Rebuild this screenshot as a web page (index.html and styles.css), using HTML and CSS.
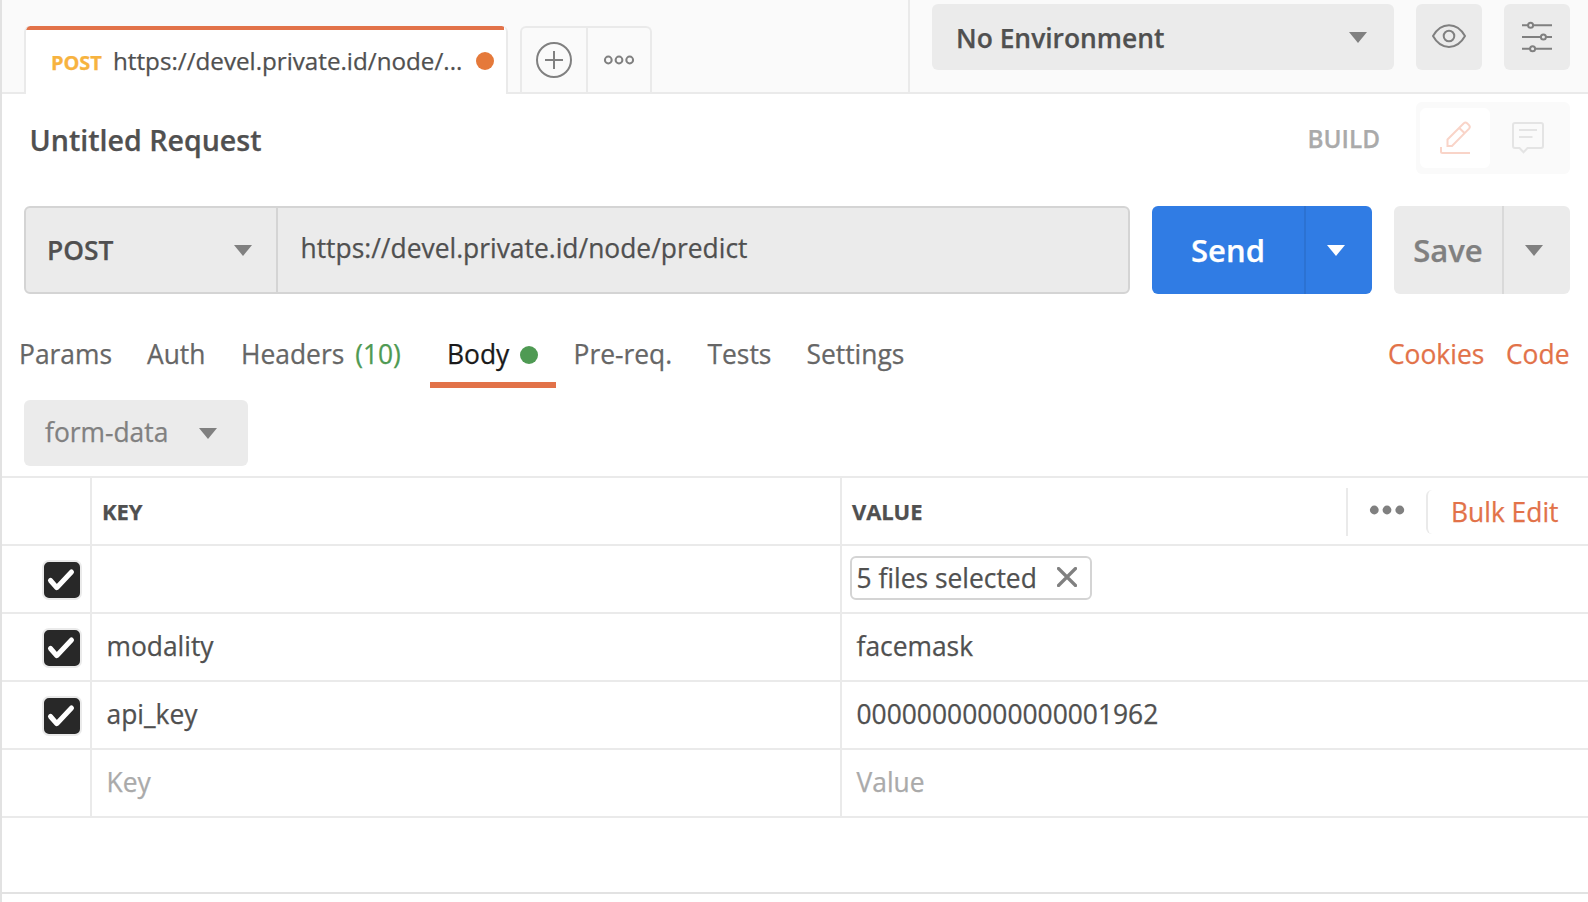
FILE: index.html
```html
<!DOCTYPE html>
<html lang="en">
<head>
<meta charset="utf-8">
<title>Untitled Request</title>
<link rel="stylesheet" href="styles.css">
</head>
<body>
<main class="app">
  <header class="topbar">
    <div class="tabs">
      <div class="tab">
        <span class="tab-method">POST</span>
        <span class="tab-url">https://devel.private.id/node/...</span>
        <i class="unsaved"></i>
      </div>
      <div class="tab-actions">
        <button class="tab-action"><svg width="64" height="64" viewBox="0 0 64 64" fill="none" stroke="#808080" stroke-width="2"><circle cx="32" cy="32" r="17"/><path d="M23 32h18M32 23v18"/></svg></button>
        <button class="tab-action"><svg width="62" height="64" viewBox="0 0 62 64" fill="none" stroke="#808080" stroke-width="2"><circle cx="20.3" cy="32" r="3.4"/><circle cx="31" cy="32" r="3.4"/><circle cx="41.7" cy="32" r="3.4"/></svg></button>
      </div>
    </div>
    <div class="environment">
      <div class="env-select"><span>No Environment</span><svg class="caret" viewBox="0 0 18 11"><path d="M0 0h18L9 11z"/></svg></div>
      <button class="env-button"><svg width="66" height="66" viewBox="0 0 66 66" fill="none" stroke="#808080" stroke-width="2"><path d="M17 32C25 17.5 41 17.5 49 32C41 46.500 25 46.500 17 32Z" stroke-linejoin="round"/><circle cx="33" cy="32" r="5.300"/></svg></button>
      <button class="env-button"><svg width="66" height="66" viewBox="0 0 66 66" fill="none" stroke="#808080" stroke-width="2"><path d="M18 21.200h6M29 21.200h19M18 33h19M42 33h6M18 44.700h8M31 44.700h17"/><circle cx="26.600" cy="21.200" r="2.500"/><circle cx="39.400" cy="33" r="2.500"/><circle cx="28.600" cy="44.700" r="2.500"/></svg></button>
    </div>
  </header>

  <section class="title-row">
    <h1>Untitled Request</h1>
    <span class="mode">BUILD</span>
    <div class="mode-toggle">
      <button class="mode-button active"><svg width="70" height="60" viewBox="0 0 70 60" fill="none" stroke="#f9d4c8" stroke-width="2"><path d="M27.500 38V31.500L43.800 15.200Q45.500 13.800 47.100 15.300L49.200 17.400Q50.500 19 49.100 20.600L32 38ZM39.300 20L44.700 25.300"/><path d="M21 39V43.500Q21 45 22.500 45H50"/></svg></button>
      <button class="mode-button"><svg width="70" height="60" viewBox="0 0 70 60" fill="none" stroke="#e4e4e4" stroke-width="2"><path d="M24 15H50Q52 15 52 17V38Q52 40 50 40H36.500L32.500 44.200L28.500 40H24Q22 40 22 38V17Q22 15 24 15ZM28 22h18M28 29h13.500"/></svg></button>
    </div>
  </section>

  <section class="request-row">
    <div class="request-line">
      <div class="method"><span>POST</span><svg class="caret" viewBox="0 0 18 11"><path d="M0 0h18L9 11z"/></svg></div>
      <div class="url">https://devel.private.id/node/predict</div>
    </div>
    <div class="split send"><span class="split-main">Send</span><span class="split-more"><svg class="caret" viewBox="0 0 18 11"><path d="M0 0h18L9 11z"/></svg></span></div>
    <div class="split save"><span class="split-main">Save</span><span class="split-more"><svg class="caret" viewBox="0 0 18 11"><path d="M0 0h18L9 11z"/></svg></span></div>
  </section>

  <nav class="sections">
    <a>Params</a>
    <a>Auth</a>
    <a>Headers <span class="count">(10)</span></a>
    <a class="current">Body<i class="has-body"></i></a>
    <a>Pre-req.</a>
    <a>Tests</a>
    <a>Settings</a>
    <a class="link">Cookies</a>
    <a class="link">Code</a>
  </nav>

  <div class="body-type"><span>form-data</span><svg class="caret" viewBox="0 0 18 11"><path d="M0 0h18L9 11z"/></svg></div>

  <section class="params">
    <div class="row head">
      <div class="cell"></div>
      <div class="cell">KEY</div>
      <div class="cell">VALUE
        <div class="head-tools">
          <button class="more"><svg width="78" height="48" viewBox="0 0 78 48" fill="#808080"><circle cx="26.300" cy="22" r="4.400"/><circle cx="39" cy="22" r="4.400"/><circle cx="51.800" cy="22" r="4.400"/></svg></button>
          <button class="bulk">Bulk Edit</button>
        </div>
      </div>
    </div>
    <div class="row">
      <div class="cell"><svg class="check" viewBox="0 0 36 36"><path d="M6.500 18.500L12.700 25.700L27.500 10"/></svg></div>
      <div class="cell"></div>
      <div class="cell files"><div class="chip">5 files selected<svg width="20" height="20" viewBox="0 0 20 20"><path d="M1.500 1.500L18.500 18.500M18.500 1.500L1.500 18.500"/></svg></div></div>
    </div>
    <div class="row">
      <div class="cell"><svg class="check" viewBox="0 0 36 36"><path d="M6.500 18.500L12.700 25.700L27.500 10"/></svg></div>
      <div class="cell">modality</div>
      <div class="cell">facemask</div>
    </div>
    <div class="row">
      <div class="cell"><svg class="check" viewBox="0 0 36 36"><path d="M6.500 18.500L12.700 25.700L27.500 10"/></svg></div>
      <div class="cell">api_key</div>
      <div class="cell">00000000000000001962</div>
    </div>
    <div class="row empty">
      <div class="cell"></div>
      <div class="cell">Key</div>
      <div class="cell">Value</div>
    </div>
  </section>
  <footer class="response"></footer>
</main>
</body>
</html>
```
FILE: styles.css
```css
* { box-sizing: border-box; }

body {
  margin: 0;
  background: #fff;
  color: #505050;
  font: 400 26.4px "Open Sans", sans-serif;
  -webkit-text-stroke: 0.25px currentColor;
}

button {
  margin: 0;
  padding: 0;
  border: 0;
  background: none;
  color: inherit;
  font: inherit;
  letter-spacing: inherit;
}

svg { display: block; }

.app {
  display: flex;
  flex-direction: column;
  width: 1588px;
  height: 902px;
  border-left: 2px solid #e2e2e2;
  overflow: hidden;
}

.caret {
  flex: none;
  width: 18px;
  height: 11px;
  fill: #808080;
}

/* Top bar */
.topbar {
  display: flex;
  flex: none;
  height: 94px;
  background: #fafafa;
  border-bottom: 2px solid #eaeaea;
}

.tabs {
  display: flex;
  flex: none;
  width: 906px;
  padding: 26px 0 0 22px;
}

.tab {
  display: flex;
  align-items: baseline;
  width: 484px;
  height: 68px;
  padding: 0 12px 0 25px;
  border: solid #eaeaea;
  border-width: 0 2px;
  border-radius: 6px 6px 0 0;
  background: linear-gradient(#e27249, #e27249) 0 0 / 478px 4px no-repeat, #fff;
  line-height: 70px;
}

.tab-method {
  width: 62px;
  color: #f7b33f;
  font-size: 20px;
  font-weight: 700;
  letter-spacing: -0.1px;
}

.tab-url {
  width: 363px;
  font-size: 24.2px;
  white-space: nowrap;
}

.unsaved {
  align-self: center;
  width: 18px;
  height: 18px;
  margin-top: 2px;
  border-radius: 50%;
  background: #e5793a;
}

.tab-actions {
  display: flex;
  height: 66px;
  margin-left: 12px;
  border: 2px solid #eaeaea;
  border-bottom: 0;
  border-radius: 6px 6px 0 0;
}

.tab-action + .tab-action { border-left: 2px solid #eaeaea; }

.environment {
  display: flex;
  flex: 1;
  gap: 22px;
  padding: 4px 18px 0 22px;
  border-left: 2px solid #eaeaea;
}

.env-select,
.env-button {
  height: 66px;
  border-radius: 6px;
  background: #ebebeb;
}

.env-select {
  display: flex;
  align-items: center;
  justify-content: space-between;
  width: 462px;
  padding: 0 27px 0 24px;
  font-weight: 600;
  line-height: 66px;
}

.env-select span { margin-top: 2px; }
.env-button { flex: none; width: 66px; }

/* Request title */
.title-row {
  display: flex;
  flex: none;
  align-items: center;
  height: 88px;
  padding: 0 18px 0 27.5px;
}

h1 {
  flex: 1;
  margin: 2px 0 0;
  font-size: 28.6px;
  font-weight: 600;
}

.mode {
  margin: 0 36px 0 0;
  color: #aaa;
  font-size: 24.3px;
  font-weight: 600;
}

.mode-toggle {
  display: flex;
  gap: 1px;
  width: 154px;
  height: 72px;
  padding: 6px 4px;
  border-radius: 6px;
  background: #fafafa;
}

.mode-button {
  width: 70px;
  height: 60px;
  border-radius: 6px;
}

.mode-button.active { background: #fff; }

/* URL line */
.request-row {
  display: flex;
  flex: none;
  gap: 22px;
  height: 112px;
  padding: 24px 18px 0 22px;
}

.request-line {
  display: flex;
  width: 1106px;
  height: 88px;
  border: 2px solid #d4d4d4;
  border-radius: 6px;
  background: #ebebeb;
}

.method {
  display: flex;
  align-items: center;
  justify-content: space-between;
  width: 252px;
  padding: 0 24px 0 21px;
  border-right: 2px solid #d4d4d4;
  font-weight: 600;
}

.url {
  padding-left: 22.5px;
  line-height: 80px;
}

.split {
  display: flex;
  height: 88px;
  border-radius: 6px;
  background: #ebebeb;
  color: #808080;
  font-size: 31px;
  font-weight: 600;
  line-height: 88px;
}

.split-main { flex: 1; text-align: center; }

.split-more {
  display: flex;
  align-items: center;
  justify-content: center;
  width: 68px;
  padding-right: 6px;
  border-left: 2px solid #d9d9d9;
}

.send { width: 220px; background: #307ce4; color: #fff; }
.send .split-more { border-color: #2c72d2; }
.send .caret { fill: #fff; }
.save { width: 176px; }

/* Request sections */
.sections {
  display: grid;
  grid-template-columns: 128px 94px 187px 145.5px 134px 99px 581px 118px 66px;
  flex: none;
  height: 88px;
  margin: 6px 0 0 17px;
  padding-top: 20px;
  color: #666;
  line-height: 68px;
}

.sections a { height: 68px; white-space: nowrap; }
.sections .count { margin-left: 4px; color: #4f9a53; }

.sections .current {
  display: flex;
  align-items: center;
  width: 126px;
  height: 68px;
  margin-left: 2px;
  padding-left: 17px;
  background: linear-gradient(#e27249, #e27249) bottom / 100% 6px no-repeat;
  color: #1a1a1a;
}

.has-body {
  width: 18px;
  height: 18px;
  margin: 2px 0 0 11px;
  border-radius: 50%;
  background: #4f9a53;
}

.sections .link { padding-left: 0.5px; color: #e27249; }

.body-type {
  display: flex;
  flex: none;
  align-items: center;
  justify-content: space-between;
  width: 224px;
  height: 66px;
  margin: 12px 0 10px 22px;
  padding: 0 31px 0 21px;
  border-radius: 6px;
  background: #ebebeb;
  color: #808080;
  line-height: 64px;
}

.body-type span { margin-top: -2px; }

/* Form-data table */
.params { flex: none; border-top: 2px solid #eaeaea; }

.row {
  display: grid;
  grid-template-columns: 90px 750px 1fr;
  height: 68px;
  border-bottom: 2px solid #eaeaea;
  line-height: 64px;
}

.cell {
  padding-left: 14.5px;
  border-right: 2px solid #eaeaea;
}

.cell:first-child { padding-left: 14px; }
.cell:last-child { border-right: 0; }

.head .cell {
  display: flex;
  justify-content: space-between;
  padding-left: 10px;
  font-size: 22px;
  font-weight: 700;
  letter-spacing: -0.1px;
  line-height: 66px;
}

.head-tools {
  display: flex;
  width: 242px;
  font-size: 26.4px;
  font-weight: 400;
  letter-spacing: 0;
}

.more {
  width: 80px;
  height: 48px;
  margin-top: 10px;
  border-left: 2px solid #eaeaea;
}

.bulk {
  height: 44px;
  margin-top: 12px;
  padding-left: 23px;
  border-left: 2px solid #eaeaea;
  border-radius: 6px;
  color: #e27249;
  line-height: 44px;
}

.check {
  width: 40px;
  height: 40px;
  margin: 14px 0 0 26px;
  border: 2px solid #eaeaea;
  border-radius: 7px;
  background: #282828;
  fill: none;
  stroke: #fff;
  stroke-width: 5;
  stroke-linecap: round;
  stroke-linejoin: round;
}

.row .files { padding: 10px 0 0 8px; }

.chip {
  display: flex;
  align-items: center;
  justify-content: space-between;
  width: 242px;
  height: 44px;
  padding: 0 13px 0 4.5px;
  border: 2px solid #d4d4d4;
  border-radius: 6px;
  line-height: 40px;
}

.chip svg {
  margin-top: -2px;
  fill: none;
  stroke: #808080;
  stroke-width: 3.2;
  stroke-linecap: round;
}

.empty { color: #aaa; }

.response {
  height: 10px;
  margin-top: 74px;
  border-top: 2px solid #e2e2e2;
}
```
